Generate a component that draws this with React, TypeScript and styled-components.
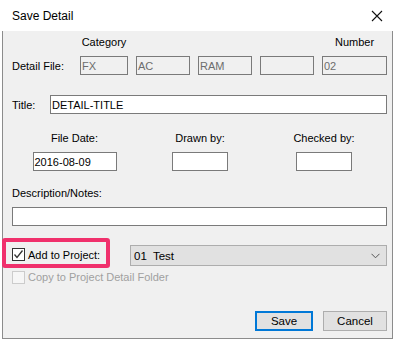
import React from 'react'
import styled, { createGlobalStyle } from 'styled-components'

const Global = createGlobalStyle`
    html, body {
        margin: 0;
        padding: 0;
        background: #fff;
    }
    body {
        font-family: "Liberation Sans", Arial, sans-serif;
        font-size: 11px;
        color: #000;
    }
`

const Window = styled.div`
    width: 395px;
    height: 340px;
    box-sizing: border-box;
    display: flex;
    flex-direction: column;
    padding: 0 2px 1px 2px;
    background: #fff;
`
const TitleBar = styled.div`
    height: 31px;
    display: flex;
    align-items: center;
    justify-content: space-between;
    padding: 0 10px 0 10px;
    background: #fff;
    font-size: 12px;
`
const Body = styled.div`
    flex: 1;
    position: relative;
    background: #f0f0f0;
    border: 1px solid #8c8c8c;
    border-top: none;
    padding: 0 5px 0 9px;
    display: flex;
    flex-direction: column;
`
const Row = styled.div<{ h: number, mt: number }>`
    height: ${p => p.h}px;
    margin-top: ${p => p.mt}px;
    display: flex;
    align-items: center;
`
const CodeGrid = styled.div<{ h: number, mt: number }>`
    height: ${p => p.h}px;
    margin-top: ${p => p.mt}px;
    display: grid;
    grid-template-columns: 60px 48px 54px 54px 54px 65px;
    column-gap: 8px;
    align-items: center;
`
const ThreeCol = styled.div<{ h: number, mt: number }>`
    height: ${p => p.h}px;
    margin-top: ${p => p.mt}px;
    display: grid;
    grid-template-columns: 125px 126px 122px;
    align-items: center;
    justify-items: center;
`
const HeadLabel = styled.span`
    text-align: center;
`
const Label = styled.span<{ w?: number }>`
    width: ${p => p.w ? `${p.w}px` : 'auto'};
    flex-shrink: 0;
`
const Field = styled.div<{ w?: number, disabled?: boolean }>`
    box-sizing: border-box;
    width: ${p => p.w ? `${p.w}px` : '100%'};
    height: 19px;
    border: 1px solid #7a7a7a;
    background: ${p => p.disabled ? '#f0f0f0' : '#fff'};
    color: ${p => p.disabled ? '#6d6d6d' : '#000'};
    display: flex;
    align-items: center;
    padding: 0 1px;
    white-space: nowrap;
`
const CheckRow = styled.label<{ disabled?: boolean }>`
    display: flex;
    align-items: center;
    gap: 3px;
    color: ${p => p.disabled ? '#a0a0a0' : '#000'};
    position: relative;
    margin-top: -2px;
`
const Box = styled.span<{ disabled?: boolean }>`
    box-sizing: border-box;
    width: 13px;
    height: 13px;
    border: 1px solid ${p => p.disabled ? '#cccccc' : '#333'};
    background: ${p => p.disabled ? '#f6f6f6' : '#fff'};
    display: flex;
    align-items: center;
    justify-content: center;
`
const Highlight = styled.span`
    position: absolute;
    box-sizing: border-box;
    left: -10px;
    top: -10px;
    width: 108px;
    height: 30px;
    border: 4px solid #f0306c;
    border-radius: 3px;
    pointer-events: none;
`
const Select = styled.div`
    box-sizing: border-box;
    margin-left: auto;
    width: 257px;
    height: 21px;
    border: 1px solid #adadad;
    background: #e1e1e1;
    display: flex;
    align-items: center;
    justify-content: space-between;
    padding: 0 6px 0 3px;
    font-size: 11.5px;
    white-space: pre;
`
const ButtonBar = styled.div`
    margin-top: auto;
    margin-bottom: 7px;
    display: flex;
    justify-content: flex-end;
    gap: 10px;
`
const Button = styled.div<{ primary?: boolean }>`
    box-sizing: border-box;
    width: ${p => p.primary ? 58 : 64}px;
    height: 20px;
    border: ${p => p.primary ? '2px solid #0078d7' : '1px solid #adadad'};
    background: #e1e1e1;
    display: flex;
    align-items: center;
    justify-content: center;
    font-size: 11.5px;
`

const Check = () => (
    <svg width="11" height="11" viewBox="0 0 11 11">
        <path d="M1.5 5.5 L4 8.5 L9.5 1.5" fill="none" stroke="#333" strokeWidth="1.3" />
    </svg>
)

const Chevron = () => (
    <svg width="9" height="6" viewBox="0 0 9 6">
        <path d="M0.5 0.8 L4.5 4.8 L8.5 0.8" fill="none" stroke="#555" strokeWidth="1" />
    </svg>
)

const Close = () => (
    <svg width="12" height="12" viewBox="0 0 12 12">
        <path d="M1 1 L11 11 M11 1 L1 11" stroke="#111" strokeWidth="1.1" />
    </svg>
)

const App: React.FC = () => {
    const codes = [
        { v: 'FX' }, { v: 'AC' }, { v: 'RAM' }, { v: '' }, { v: '02' }
    ]
    return (
        <Window>
            <Global />
            <TitleBar>
                <span>Save Detail</span>
                <Close />
            </TitleBar>
            <Body>
                <CodeGrid h={14} mt={4}>
                    <span />
                    <HeadLabel>Category</HeadLabel>
                    <span /><span /><span />
                    <HeadLabel>Number</HeadLabel>
                </CodeGrid>
                <CodeGrid h={19} mt={7}>
                    <Label>Detail File:</Label>
                    {codes.map((c, i) => <Field key={i} disabled>{c.v}</Field>)}
                </CodeGrid>
                <Row h={19} mt={20}>
                    <Label w={38}>Title:</Label>
                    <Field>DETAIL-TITLE</Field>
                </Row>
                <ThreeCol h={14} mt={17}>
                    <span>File Date:</span>
                    <span>Drawn by:</span>
                    <span>Checked by:</span>
                </ThreeCol>
                <ThreeCol h={18} mt={7}>
                    <Field w={84}>2016-08-09</Field>
                    <Field w={56} />
                    <Field w={56} />
                </ThreeCol>
                <Row h={14} mt={16}>
                    <Label>Description/Notes:</Label>
                </Row>
                <Row h={18} mt={7}>
                    <Field />
                </Row>
                <Row h={21} mt={20}>
                    <CheckRow>
                        <Highlight />
                        <Box><Check /></Box>
                        Add to Project:
                    </CheckRow>
                    <Select>
                        <span>01  Test</span>
                        <Chevron />
                    </Select>
                </Row>
                <Row h={14} mt={5}>
                    <CheckRow disabled>
                        <Box disabled />
                        Copy to Project Detail Folder
                    </CheckRow>
                </Row>
                <ButtonBar>
                    <Button primary>Save</Button>
                    <Button>Cancel</Button>
                </ButtonBar>
            </Body>
        </Window>
    )
}

export default App
